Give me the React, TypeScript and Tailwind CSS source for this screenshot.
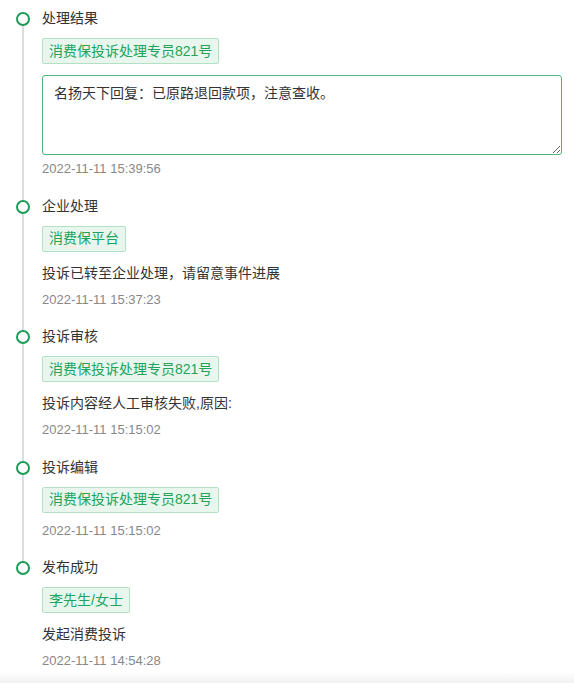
import React from "react";

type Item = {
  title: string;
  tag: string;
  reply?: string;
  text?: string;
  date: string;
};

const items: Item[] = [
  {
    title: "处理结果",
    tag: "消费保投诉处理专员821号",
    reply: "名扬天下回复：已原路退回款项，注意查收。",
    date: "2022-11-11 15:39:56",
  },
  {
    title: "企业处理",
    tag: "消费保平台",
    text: "投诉已转至企业处理，请留意事件进展",
    date: "2022-11-11 15:37:23",
  },
  {
    title: "投诉审核",
    tag: "消费保投诉处理专员821号",
    text: "投诉内容经人工审核失败,原因:",
    date: "2022-11-11 15:15:02",
  },
  {
    title: "投诉编辑",
    tag: "消费保投诉处理专员821号",
    date: "2022-11-11 15:15:02",
  },
  {
    title: "发布成功",
    tag: "李先生/女士",
    text: "发起消费投诉",
    date: "2022-11-11 14:54:28",
  },
];

export default function App() {
  return (
    <div
      className="bg-white min-h-[683px] flex flex-col"
      style={{ fontFamily: '"Liberation Sans", "Noto Sans CJK SC", sans-serif' }}
    >
      <div className="pt-[8px] pr-[12px] flex-1">
        {items.map((it, i) => {
          const last = i === items.length - 1;
          return (
            <div key={i} className={`relative pl-[42px] ${last ? "" : "pb-[16.5px]"}`}>
              {!last && (
                <div className="absolute left-[21.5px] top-[11px] bottom-[-11px] w-[2px] bg-[#dddddd]" />
              )}
              <div className="absolute left-[15.5px] top-[4px] w-[14px] h-[14px] rounded-full border-[2.5px] border-[#1c9d57] bg-white" />
              <div className="text-[14px] leading-[20px] text-[#333333]">{it.title}</div>
              <div className="mt-[10px] flex">
                <span className="h-[26px] px-[6px] flex items-center text-[14px] text-[#22a35c] bg-[#e8f6ee] border border-[#b2e1c5] rounded-[2px]">
                  {it.tag}
                </span>
              </div>
              {it.reply && (
                <textarea
                  readOnly
                  value={it.reply}
                  className="mt-[11px] block w-[520px] h-[80px] px-[11px] py-[7px] text-[14px] leading-[20px] text-[#333333] border border-[#4cb87a] rounded-[3px] outline-none bg-white"
                  style={{ fontFamily: '"Liberation Sans", "Noto Sans CJK SC", sans-serif' }}
                />
              )}
              {it.text && (
                <div className="mt-[11px] text-[14px] leading-[20px] text-[#333333]">{it.text}</div>
              )}
              <div
                className={`${it.reply ? "mt-[4px]" : it.text ? "mt-[7px]" : "mt-[8px]"} text-[13px] leading-[20px] text-[#888888]`}
              >
                {it.date}
              </div>
            </div>
          );
        })}
      </div>
      <div className="h-[11px] bg-gradient-to-b from-white to-[#f1f1f1]" />
    </div>
  );
}
